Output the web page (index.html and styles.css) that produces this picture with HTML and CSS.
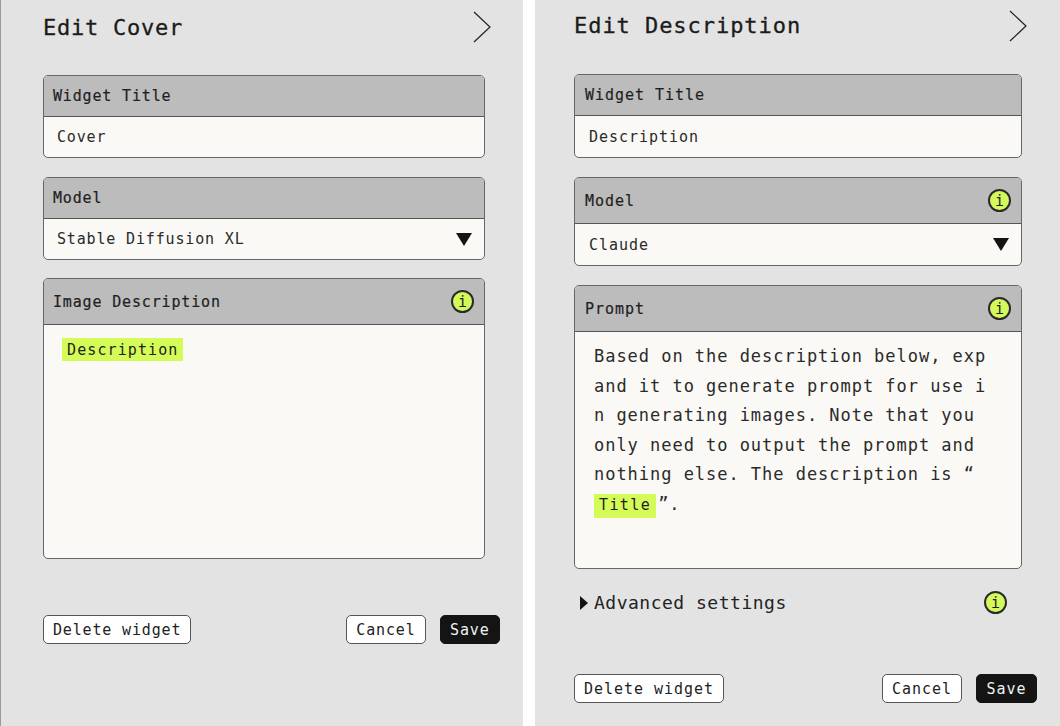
FILE: index.html
```html
<!DOCTYPE html>
<html lang="en">
<head>
<meta charset="utf-8">
<title>Edit widgets</title>
<link rel="stylesheet" href="styles.css">
</head>
<body>
<main class="page">
  <section class="panel panel-cover">
    <header class="panel-head">
      <h1 class="panel-title">Edit Cover</h1>
      <svg class="chevron" viewBox="0 0 18 32" aria-hidden="true"><polyline points="1,1 17,16 1,31"/></svg>
    </header>
    <div class="card card-plain">
      <div class="card-head"><span>Widget Title</span></div>
      <div class="card-row"><span>Cover</span></div>
    </div>
    <div class="card card-plain card-last">
      <div class="card-head"><span>Model</span></div>
      <div class="card-row"><span>Stable Diffusion XL</span><i class="caret"></i></div>
    </div>
    <div class="card card-image">
      <div class="card-head card-head-tall"><span>Image Description</span><span class="info">i</span></div>
      <div class="card-body card-body-image"><mark class="tag">Description</mark></div>
    </div>
    <footer class="actions actions-cover">
      <button class="btn">Delete widget</button>
      <span class="actions-right">
        <button class="btn">Cancel</button>
        <button class="btn btn-primary">Save</button>
      </span>
    </footer>
  </section>

  <section class="panel panel-desc">
    <header class="panel-head">
      <h1 class="panel-title">Edit Description</h1>
      <svg class="chevron" viewBox="0 0 18 32" aria-hidden="true"><polyline points="1,1 17,16 1,31"/></svg>
    </header>
    <div class="card card-plain">
      <div class="card-head"><span>Widget Title</span></div>
      <div class="card-row"><span>Description</span></div>
    </div>
    <div class="card card-plain">
      <div class="card-head card-head-tall"><span>Model</span><span class="info">i</span></div>
      <div class="card-row"><span>Claude</span><i class="caret"></i></div>
    </div>
    <div class="card card-prompt">
      <div class="card-head card-head-tall"><span>Prompt</span><span class="info">i</span></div>
      <div class="card-body card-body-prompt">Based on the description below, expand it to generate prompt for use in generating images. Note that you only need to output the prompt and nothing else. The description is “<mark class="tag tag-title">Title</mark>”.</div>
    </div>
    <div class="advanced">
      <span class="advanced-label"><i class="caret-right"></i>Advanced settings</span>
      <span class="info">i</span>
    </div>
    <footer class="actions actions-desc">
      <button class="btn">Delete widget</button>
      <span class="actions-right">
        <button class="btn">Cancel</button>
        <button class="btn btn-primary">Save</button>
      </span>
    </footer>
  </section>
</main>
</body>
</html>
```
FILE: styles.css
```css
* { box-sizing: border-box; }
html, body { margin: 0; height: 100%; background: #fff; }
body { font-family: "DejaVu Sans Mono", "Liberation Mono", monospace; color: #222; overflow: hidden; }

.page { display: grid; grid-template-columns: 523px 525px; column-gap: 12px; height: 726px; }
.panel { background: #e3e3e3; height: 726px; display: flex; flex-direction: column; }
.panel-cover { border-left: 1px solid #9a9a9a; padding: 0 23px 0 42px; letter-spacing: 0.84px; }
.panel-desc { padding: 0 23px 0 39px; letter-spacing: 0.97px; }

.panel-head { display: flex; align-items: center; justify-content: space-between; height: 54px; margin-bottom: 21px; }
.panel-cover .panel-head { padding-right: 9px; }
.panel-desc .panel-head { height: 51px; margin-bottom: 23px; padding: 0 10px 0 0; }
.panel-title { margin: 0; font-size: 22px; font-weight: 400; letter-spacing: 0.95px; color: #1b1b1b; -webkit-text-stroke: 0.3px #1b1b1b; }
.panel-cover .panel-title { letter-spacing: 0.75px; }
.chevron { width: 18px; height: 32px; fill: none; stroke: #222; stroke-width: 1.2; }

.card { border: 1px solid #666; border-radius: 5px; overflow: hidden; background: #faf9f5; }
.panel-cover .card { width: 442px; }
.panel-desc .card { width: 448px; }
.card-plain { margin-bottom: 19px; }
.card-last { margin-bottom: 18px; }
.card-head {
  display: flex; align-items: center; justify-content: space-between;
  height: 41px; padding: 0 10px 0 9px;
  background: #bcbcbc; border-bottom: 1px solid #555;
  font-size: 15px; color: #1f1f1f; -webkit-text-stroke: 0.2px #1f1f1f;
}
.panel-desc .card-head { padding-left: 10px; }
.card-head-tall { height: 46px; }
.card-row {
  display: flex; align-items: center; justify-content: space-between;
  height: 41px; padding: 0 12px 0 13px;
  font-size: 15px; color: #2a2a2a;
}
.panel-desc .card-row { padding-left: 14px; }
.panel-cover .card-row { height: 40px; }

.card-image { height: 281px; }
.card-prompt { height: 284px; }
.card-body-image { padding: 13px 18px; font-size: 15px; }
.card-body-prompt {
  padding: 10px 31px 0 19px;
  font-size: 17px; line-height: 29.5px; letter-spacing: 0.97px;
  word-break: break-all; color: #2a2a2a;
}

.tag { display: inline-block; background: #d4fb57; color: #1f1f1f; padding: 0 5px; height: 23px; line-height: 24px; letter-spacing: 1.1px; }
.tag-title { height: 24px; line-height: 23px; margin-right: 2px; font-size: 15px; letter-spacing: 1.4px; }

.info {
  display: flex; align-items: center; justify-content: center;
  width: 23px; height: 23px; border-radius: 50%;
  border: 2px solid #2a2a2a; background: #d3f95a;
  font-size: 15px; letter-spacing: 0; color: #1f1f1f; -webkit-text-stroke: 0; flex: none;
}

.caret { width: 0; height: 0; border-left: 8px solid transparent; border-right: 8px solid transparent; border-top: 13px solid #141414; }
.caret-right { display: inline-block; width: 0; height: 0; margin-right: 6px; border-top: 7px solid transparent; border-bottom: 7px solid transparent; border-left: 8px solid #141414; }

.advanced { display: flex; align-items: center; justify-content: space-between; height: 23px; margin: 22px 0 0 6px; width: 427px; }
.advanced-label { display: flex; align-items: center; font-size: 18px; letter-spacing: 0.5px; color: #222; }

.actions { display: flex; justify-content: space-between; align-items: center; }
.actions-cover { margin-top: 56px; }
.actions-desc { margin-top: 60px; }
.actions-right { display: flex; gap: 14px; }
.btn {
  font: inherit; font-size: 15px; letter-spacing: inherit; height: 29px; padding: 0 9px;
  background: #fff; color: #222; border: 1px solid #555; border-radius: 5px;
}
.btn-primary { background: #141414; color: #f2f2f2; border-color: #141414; padding: 0 9.5px; }
```
